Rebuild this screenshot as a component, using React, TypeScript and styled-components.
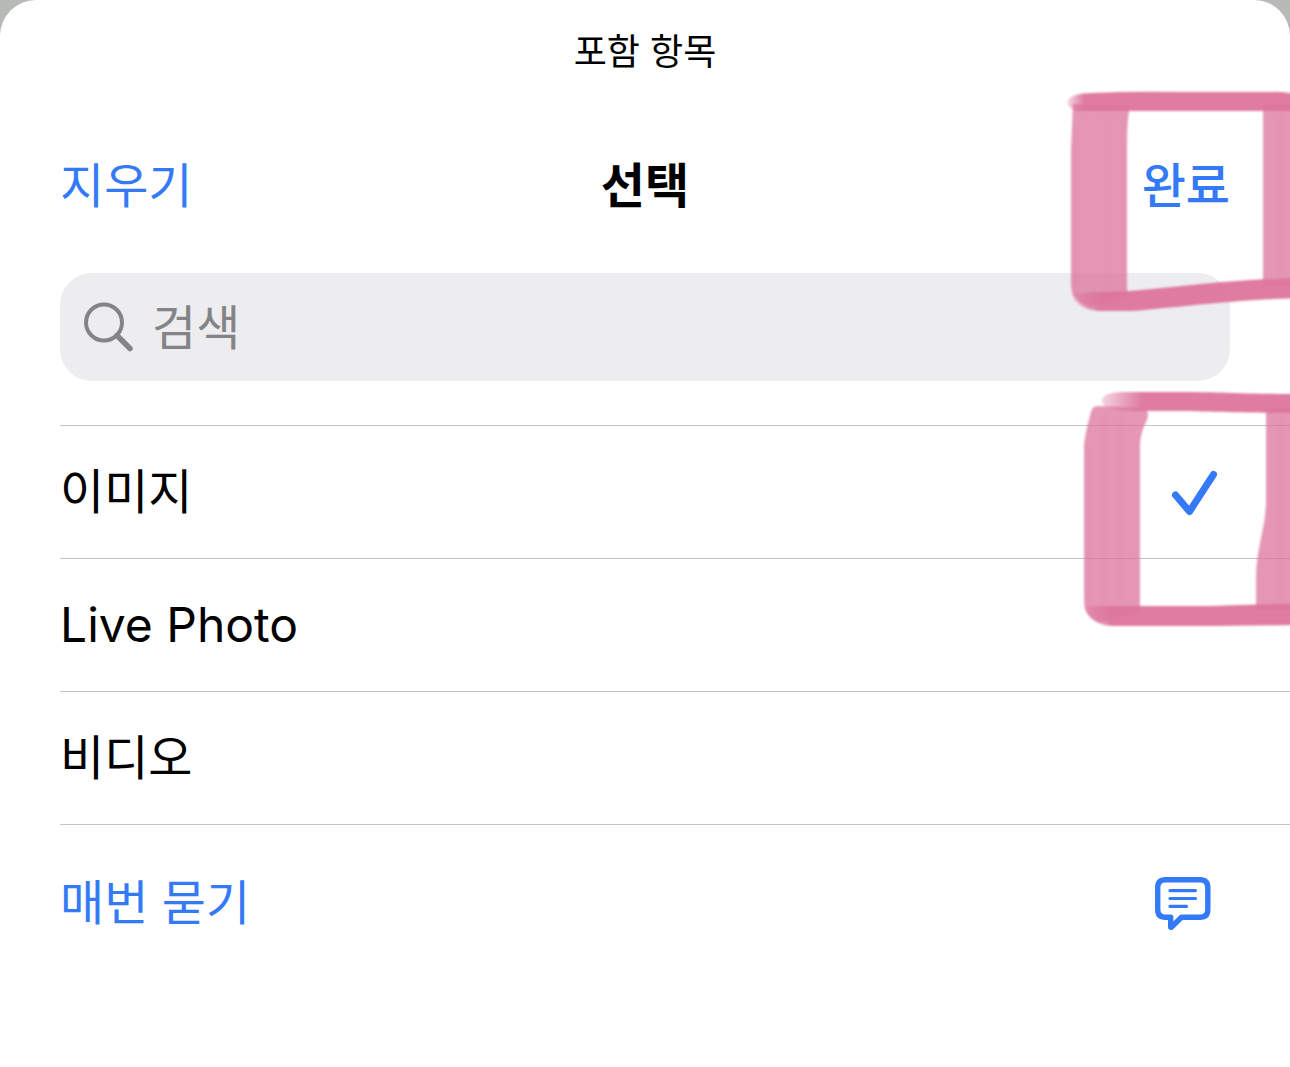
import React, { useState } from 'react';
import styled, { createGlobalStyle } from 'styled-components';

const blue = '#347af6';

const GlobalStyle = createGlobalStyle`
  * { box-sizing: border-box; }
  body {
    margin: 0;
    background: #b8bab8;
    font-family: Inter, "Noto Sans CJK KR", sans-serif;
    color: #000;
  }
`;

const Sheet = styled.main`
  position: relative;
  min-height: 100vh;
  overflow: hidden;
  background: #fff;
  border-radius: 36px 36px 0 0;
  line-height: 68px;
`;

const SheetTitle = styled.p`
  margin: 0;
  padding-top: 28px;
  text-align: center;
  font-size: 36px;
  line-height: 48px;
`;

const NavBar = styled.header`
  display: grid;
  grid-template-columns: 1fr auto 1fr;
  align-items: center;
  padding: 76px 60px 53px;
`;

const Heading = styled.h1`
  margin: 0;
  font-size: 48px;
  font-weight: 700;
`;

const TextButton = styled.button<{ $strong?: boolean }>`
  justify-self: ${(p) => (p.$strong ? 'end' : 'start')};
  padding: 0;
  border: 0;
  background: none;
  color: ${blue};
  font: inherit;
  font-size: 48px;
  font-weight: ${(p) => (p.$strong ? 500 : 400)};
  cursor: pointer;
`;

const SearchBox = styled.label`
  display: flex;
  align-items: center;
  gap: 16px;
  height: 108px;
  margin: 0 60px 44px;
  padding: 0 22px;
  border-radius: 32px;
  background: #ededef;
`;

const SearchInput = styled.input`
  flex: 1;
  min-width: 0;
  height: 72px;
  padding: 0;
  border: 0;
  outline: 0;
  background: transparent;
  color: #000;
  font: inherit;
  font-size: 48px;
  &::placeholder { color: #848488; opacity: 1; }
`;

const Options = styled.ul`
  margin: 0;
  padding: 0 0 0 60px;
  list-style: none;
`;

const Option = styled.li`
  border-top: 1px solid #c4c4c6;
`;

const OptionLabel = styled.label`
  display: flex;
  align-items: center;
  justify-content: space-between;
  height: 132px;
  padding-right: 60px;
  font-size: 48px;
  cursor: pointer;
`;

const Checkbox = styled.input`
  appearance: none;
  position: absolute;
  width: 1px;
  height: 1px;
  margin: 0;
  opacity: 0;
`;

const AskRow = styled.button`
  display: flex;
  align-items: center;
  justify-content: space-between;
  width: 100%;
  height: 156px;
  padding: 0 60px 0 0;
  border: 0;
  background: none;
  color: ${blue};
  font: inherit;
  font-size: 48px;
  cursor: pointer;
`;

const Marker = styled.svg`
  position: absolute;
  top: 80px;
  right: 0;
  pointer-events: none;
`;

function SearchIcon() {
  return (
    <svg width="54" height="54" viewBox="0 0 54 54" fill="none" stroke="#848488" aria-hidden="true">
      <circle cx="22" cy="22.5" r="18" strokeWidth="4" />
      <path d="M35 35.5 48 48.500" strokeWidth="5.500" strokeLinecap="round" />
    </svg>
  );
}

function CheckIcon() {
  return (
    <svg width="80" height="64" viewBox="0 0 80 64" fill="none" stroke={blue} aria-hidden="true">
      <path d="M25.500 35 39.500 51.500 63.500 14.500" strokeWidth="7" strokeLinecap="round" strokeLinejoin="round" />
    </svg>
  );
}

function BubbleIcon() {
  return (
    <svg width="80" height="64" viewBox="0 0 80 64" fill="none" stroke={blue} strokeLinecap="round" strokeLinejoin="round" aria-hidden="true">
      <path
        d="M15.500 8.700H50q7.800 0 7.800 7.800v22q0 7.800-7.800 7.800H31.500L21.300 56.200q-.6.500-.6-.3V46.300H15.500q-7.800 0-7.800-7.800v-22q0-7.800 7.800-7.800Z"
        strokeWidth="5.400"
      />
      <path d="M20 19.600H45.500M20 27.500H45.500M20 35.300H36.500" strokeWidth="3.200" />
    </svg>
  );
}

const fades = [
  { id: 'fadeTopA', from: 1066, to: 1084, start: 0.2 },
  { id: 'fadeBottomA', from: 1070, to: 1100, start: 0.2 },
  { id: 'fadeTopB', from: 1101, to: 1142, start: 0.3 },
  { id: 'fadeBottomB', from: 1084, to: 1110, start: 0.3 },
];

function PenMarks() {
  return (
    <Marker width="230" height="560" viewBox="1060 80 230 560" aria-hidden="true">
      <defs>
        <filter id="soft" x="-5%" y="-5%" width="110%" height="110%">
          <feGaussianBlur stdDeviation="0.9" />
        </filter>
        <filter id="streak" x="-20%" y="-20%" width="140%" height="140%">
          <feGaussianBlur stdDeviation="1.6" />
        </filter>
        {fades.map((f) => (
          <linearGradient key={f.id} id={f.id} gradientUnits="userSpaceOnUse" x1={f.from} x2={f.to} y1="0" y2="0">
            <stop offset="0" stopColor="#dd759b" stopOpacity={f.start} />
            <stop offset="1" stopColor="#dd759b" stopOpacity="0.95" />
          </linearGradient>
        ))}
      </defs>
      <g fill="#dc749b" fillOpacity="0.75" filter="url(#soft)">
        <path d="M1073 104 1130 106Q1127 118 1127 150V296L1090 307Q1071 302 1071 284V150Z" />
        <path d="M1263 104H1300V286H1263Z" />
        <path d="M1091 412Q1092 406 1098 406L1144 408Q1150 411 1147 420 1140 433 1140 446V612L1100 622Q1084 618 1084 600V445Q1085 433 1091 412Z" />
        <path d="M1266 408H1300V610H1256V578C1256 548 1266 528 1266 500Z" />
      </g>
      <g stroke="#dc749b" strokeOpacity="0.14" fill="none" filter="url(#streak)">
        <path d="M1075 125V285M1089 450V600" strokeWidth="4" />
        <path d="M1107 112V290M1123 112V290M1281 112V280M1104 415V604M1121 415V604M1281 415V604" strokeWidth="3" />
      </g>
      <g filter="url(#soft)">
        <path fill="url(#fadeTopA)" d="M1076 111Q1068 108 1067 102 1070 93 1093 93 1130 91 1180 92H1270Q1285 91 1300 95V111Z" />
        <path fill="url(#fadeBottomA)" d="M1074 293 1128 291C1175 288 1215 280 1300 278V298C1225 300 1165 309 1130 311H1098Q1076 309 1071 293Z" />
        <path fill="url(#fadeTopB)" d="M1107 408Q1101 404 1102 399 1106 392 1122 392H1185C1220 392 1240 394 1300 394V413C1240 413 1200 411 1170 411H1135Q1119 411 1107 408Z" />
        <path fill="url(#fadeBottomB)" d="M1085 606H1210Q1250 604 1300 604V625L1215 626H1113Q1089 625 1085 606Z" />
      </g>
    </Marker>
  );
}

const items = [
  { id: 'image', name: '이미지' },
  { id: 'live', name: 'Live Photo' },
  { id: 'video', name: '비디오' },
];

export default function App() {
  const [selected, setSelected] = useState<string[]>(['image']);
  const toggle = (id: string) =>
    setSelected((s) => (s.includes(id) ? s.filter((v) => v !== id) : [...s, id]));

  return (
    <>
      <GlobalStyle />
      <Sheet>
        <SheetTitle>포함 항목</SheetTitle>
        <NavBar>
          <TextButton type="button" onClick={() => setSelected([])}>지우기</TextButton>
          <Heading>선택</Heading>
          <TextButton type="button" $strong>완료</TextButton>
        </NavBar>
        <SearchBox>
          <SearchIcon />
          <SearchInput type="text" placeholder="검색" aria-label="검색" />
        </SearchBox>
        <Options>
          {items.map((item) => (
            <Option key={item.id}>
              <OptionLabel>
                <span>{item.name}</span>
                <Checkbox
                  type="checkbox"
                  checked={selected.includes(item.id)}
                  onChange={() => toggle(item.id)}
                />
                {selected.includes(item.id) && <CheckIcon />}
              </OptionLabel>
            </Option>
          ))}
          <Option>
            <AskRow type="button">
              <span>매번 묻기</span>
              <BubbleIcon />
            </AskRow>
          </Option>
        </Options>
        <PenMarks />
      </Sheet>
    </>
  );
}
